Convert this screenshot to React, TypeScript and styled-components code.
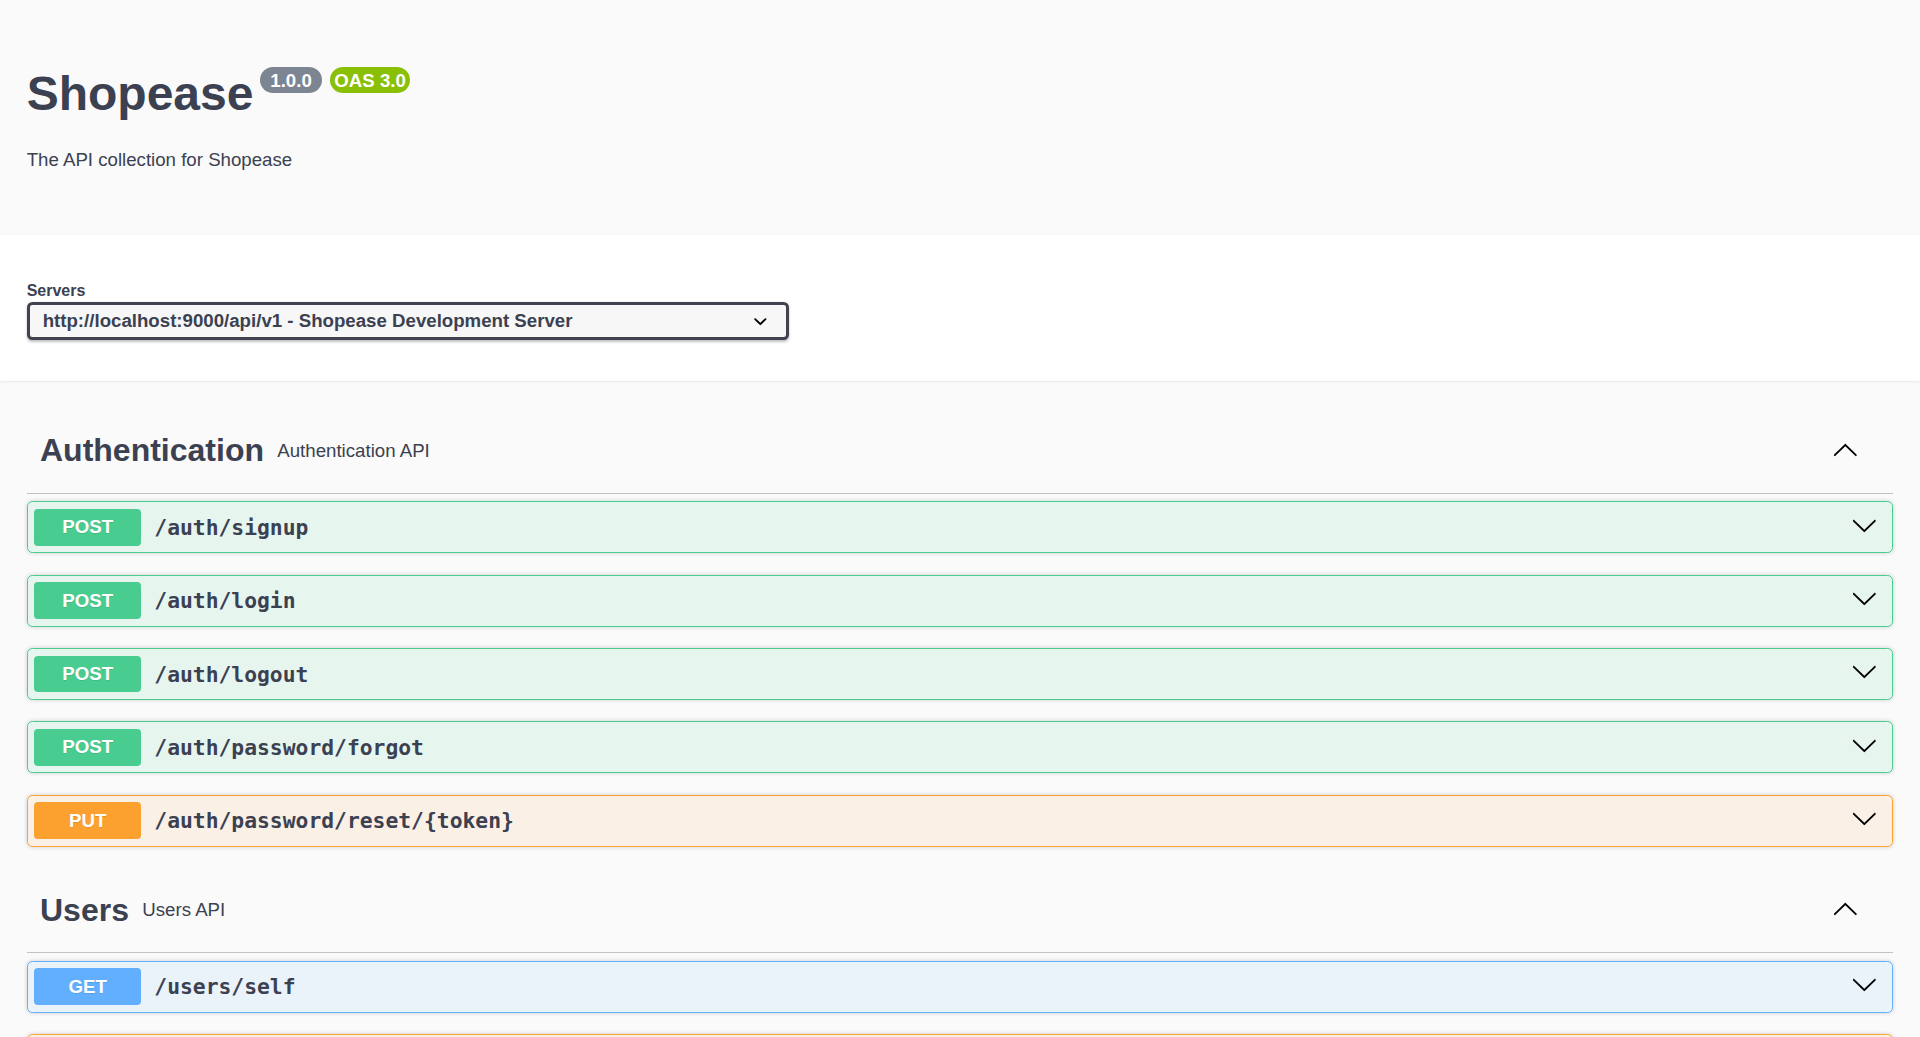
import React from "react";
import styled, { createGlobalStyle } from "styled-components";

const GlobalStyle = createGlobalStyle`
  html, body {
    margin: 0;
    padding: 0;
    background: #fafafa;
  }
  body {
    font-family: "Liberation Sans", Arial, Helvetica, sans-serif;
    color: #3b4151;
  }
  * {
    box-sizing: border-box;
  }
`;

type Method = "get" | "post" | "put" | "delete";

const methodColors: Record<Method, { solid: string; tint: string }> = {
  post: { solid: "#49cc90", tint: "rgba(73, 204, 144, 0.1)" },
  put: { solid: "#fca130", tint: "rgba(252, 161, 48, 0.1)" },
  get: { solid: "#61affe", tint: "rgba(97, 175, 254, 0.1)" },
  delete: { solid: "#f93e3e", tint: "rgba(249, 62, 62, 0.1)" },
};

interface Operation {
  method: Method;
  path: string;
}

interface Tag {
  name: string;
  description: string;
  operations: Operation[];
}

const tags: Tag[] = [
  {
    name: "Authentication",
    description: "Authentication API",
    operations: [
      { method: "post", path: "/auth/signup" },
      { method: "post", path: "/auth/login" },
      { method: "post", path: "/auth/logout" },
      { method: "post", path: "/auth/password/forgot" },
      { method: "put", path: "/auth/password/reset/{token}" },
    ],
  },
  {
    name: "Users",
    description: "Users API",
    operations: [
      { method: "get", path: "/users/self" },
      { method: "put", path: "/users/self" },
      { method: "put", path: "/users/self/password" },
      { method: "delete", path: "/users/self" },
    ],
  },
];

/* ---------- info header ---------- */

const InfoSection = styled.header`
  background: #fafafa;
  padding: 66.2px 26.67px 61px;
`;

const TitleRow = styled.div`
  display: flex;
  align-items: flex-start;
`;

const Title = styled.h2`
  margin: 0;
  font-size: 48px;
  line-height: 56px;
  font-weight: 700;
  color: #3b4151;
`;

const Badges = styled.div`
  display: flex;
  gap: 8px;
  margin-left: 7px;
  margin-top: 0.8px;
`;

const Badge = styled.span<{ $bg: string }>`
  display: inline-block;
  background: ${(p) => p.$bg};
  color: #fff;
  border-radius: 57px;
  padding: 2.67px 4.67px;
  font-size: 18.67px;
  line-height: 21px;
  font-weight: 700;
  white-space: pre;
`;

const Description = styled.p`
  margin: 24px 0 0;
  font-size: 18.67px;
  line-height: 28px;
  color: #3b4151;
`;

/* ---------- servers bar ---------- */

const SchemeBar = styled.section`
  background: #fff;
  box-shadow: 0 1.33px 2.67px 0 rgba(0, 0, 0, 0.15);
  padding: 47px 26.67px 41px;
`;

const ServersLabel = styled.div`
  font-size: 16px;
  line-height: 18px;
  font-weight: 700;
  color: #3b4151;
  margin-bottom: 2px;
`;

const ServerSelect = styled.div`
  width: 762px;
  height: 38px;
  display: flex;
  align-items: center;
  justify-content: space-between;
  padding: 0 12px 0 13px;
  background: #f7f7f7;
  border: 3px solid #41444e;
  border-radius: 5.33px;
  box-shadow: 0 1.33px 2.67px 0 rgba(0, 0, 0, 0.25);
  font-size: 18.67px;
  font-weight: 700;
  color: #3b4151;
  cursor: pointer;
`;

/* ---------- operations ---------- */

const Main = styled.main`
  padding: 27.5px 26.67px 0;
`;

const TagSection = styled.section`
  display: flex;
  flex-direction: column;
`;

const TagHeader = styled.h3`
  margin: 0 0 7.5px;
  height: 85.3px;
  display: flex;
  align-items: center;
  padding: 0 35px 0 13.33px;
  border-bottom: 1.33px solid rgba(59, 65, 81, 0.3);
  color: #3b4151;
  cursor: pointer;
`;

const TagName = styled.span`
  font-size: 32px;
  font-weight: 700;
`;

const TagDescription = styled.small`
  flex: 1;
  padding: 0 13.33px;
  font-size: 18.67px;
  font-weight: 400;
`;

const OpBlock = styled.div<{ $method: Method }>`
  display: flex;
  align-items: center;
  height: 52px;
  padding: 0 14.5px 0 6.67px;
  margin-bottom: 21.3px;
  border: 1px solid ${(p) => methodColors[p.$method].solid};
  background: ${(p) => methodColors[p.$method].tint};
  border-radius: 5.33px;
  box-shadow: 0 0 4px rgba(0, 0, 0, 0.19);
  cursor: pointer;
`;

const MethodBadge = styled.span<{ $method: Method }>`
  min-width: 106.67px;
  height: 36.7px;
  display: flex;
  align-items: center;
  justify-content: center;
  background: ${(p) => methodColors[p.$method].solid};
  border-radius: 4px;
  color: #fff;
  font-size: 18.67px;
  font-weight: 700;
  text-shadow: 0 1.33px 0 rgba(0, 0, 0, 0.1);
  text-transform: uppercase;
`;

const OpPath = styled.span`
  flex: 1;
  padding: 0 13.33px;
  font-family: "DejaVu Sans Mono", "Liberation Mono", monospace;
  font-size: 21.33px;
  font-weight: 700;
  color: #3b4151;
`;

const ArrowIcon = styled.svg<{ $lift?: number }>`
  width: 26.67px;
  height: 26.67px;
  flex-shrink: 0;
  fill: #000;
  margin-bottom: ${(p) => p.$lift ?? 0}px;
`;

const ChevronUp = () => (
  <ArrowIcon viewBox="0 0 20 20" $lift={3}>
    <path d="M17.418 14.908c.272.268.709.268.979 0s.271-.701 0-.969l-7.908-7.83c-.27-.268-.707-.268-.979 0l-7.908 7.83c-.27.268-.27.701 0 .969.271.268.709.268.979 0L10 7.767l7.418 7.141z" />
  </ArrowIcon>
);

const ChevronDown = () => (
  <ArrowIcon viewBox="0 0 20 20" $lift={5}>
    <path d="M17.418 6.109c.272-.268.709-.268.979 0s.271.701 0 .969l-7.908 7.83c-.27.268-.707.268-.979 0l-7.908-7.83c-.27-.268-.27-.701 0-.969.271-.268.709-.268.979 0L10 13.25l7.418-7.141z" />
  </ArrowIcon>
);

const SelectArrow = styled.svg`
  width: 26.67px;
  height: 26.67px;
  flex-shrink: 0;
  fill: #000;
`;

export default function App() {
  return (
    <>
      <GlobalStyle />
      <InfoSection>
        <TitleRow>
          <Title>Shopease</Title>
          <Badges>
            <Badge $bg="#7d8492">{" 1.0.0 "}</Badge>
            <Badge $bg="#89bf04">OAS 3.0</Badge>
          </Badges>
        </TitleRow>
        <Description>The API collection for Shopease</Description>
      </InfoSection>

      <SchemeBar>
        <ServersLabel>Servers</ServersLabel>
        <ServerSelect>
          <span>http://localhost:9000/api/v1 - Shopease Development Server</span>
          <SelectArrow viewBox="0 0 20 20">
            <path d="M13.418 7.859a.695.695 0 01.978 0 .68.68 0 010 .969l-3.908 3.83a.697.697 0 01-.979 0l-3.908-3.83a.68.68 0 010-.969.695.695 0 01.978 0L10 11l3.418-3.141z" />
          </SelectArrow>
        </ServerSelect>
      </SchemeBar>

      <Main>
        {tags.map((tag) => (
          <TagSection key={tag.name}>
            <TagHeader>
              <TagName>{tag.name}</TagName>
              <TagDescription>{tag.description}</TagDescription>
              <ChevronUp />
            </TagHeader>
            {tag.operations.map((op) => (
              <OpBlock key={op.method + op.path} $method={op.method}>
                <MethodBadge $method={op.method}>{op.method}</MethodBadge>
                <OpPath>{op.path}</OpPath>
                <ChevronDown />
              </OpBlock>
            ))}
          </TagSection>
        ))}
      </Main>
    </>
  );
}
